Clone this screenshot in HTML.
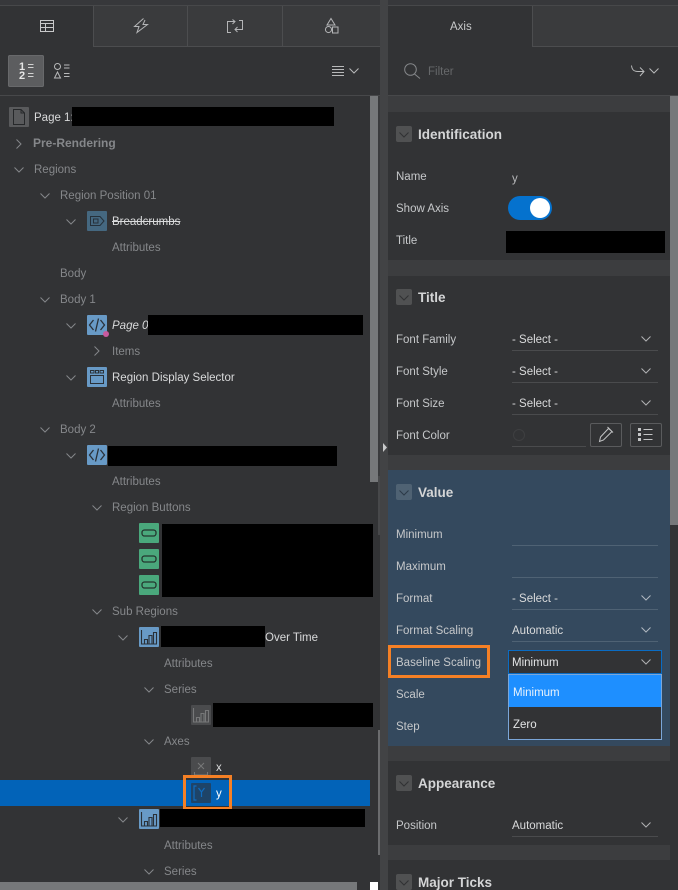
<!DOCTYPE html>
<html><head><meta charset="utf-8"><style>
html,body{margin:0;padding:0;background:#323335}
#p{position:relative;width:678px;height:890px;overflow:hidden;background:#323335;font:11.5px/16px "Liberation Sans",sans-serif;color:#d6d7d8}
#p div,#p span.a,#p svg{position:absolute}
.t{white-space:nowrap;height:16px;margin-top:1px}
.d{color:#85878a}
.w{color:#d9dadb}
.k{background:#000}
.ic{width:20px;height:20px;border-radius:1px}
.b{background:#689ac6}
.g{background:#4aa87c}
.h{font-weight:bold;font-size:13.5px;color:#d4d5d6;margin-top:1px}
.l{color:#c6c8ca;left:396px}
.u{left:512px;width:146px;height:1px;background:#4a4b4d}
.v .u,.uv{background:#4f6274}
.sel{left:512px;color:#d9dadb}
.cb{left:396px;width:16px;height:16px;background:#505152;border-radius:2px}
.band{left:388px;width:282px;background:#3c3d3f}
svg{overflow:visible}
</style></head><body><div id="p">
<svg width="0" height="0" style="left:0;top:0"><defs>
<symbol id="cd" viewBox="0 0 10 6"><path d="M0.5 .5 L5 5 L9.5 .5" fill="none" stroke="currentColor"/></symbol>
<symbol id="cr" viewBox="0 0 6 10"><path d="M.5 .5 L5 5 L.5 9.5" fill="none" stroke="currentColor"/></symbol>
<symbol id="code" viewBox="0 0 20 20"><path d="M6.5 5 L2.5 10 L6.5 15 M13.500 5 L17.500 10 L13.500 15 M11.500 3.500 L8.500 16.500" fill="none" stroke="#2a3138" stroke-width="1.300"/></symbol>
<symbol id="bar" viewBox="0 0 20 20"><path d="M2.500 3 V17 H18 M5.500 16.500 V12.500 H8.500 V16.500 M10 16.500 V8.500 H13 V16.500 M14.500 16.500 V5.500 H17.500 V16.500" fill="none" stroke="#2a3138" stroke-width="1.100"/></symbol>
<symbol id="btn" viewBox="0 0 20 20"><rect x="3" y="7" width="14" height="6" rx="2.500" fill="none" stroke="#24362e" stroke-width="1.300"/></symbol>
</defs></svg>

<div style="left:0;top:0;width:678px;height:5px;background:#37383b"></div>
<div style="left:0;top:5px;width:380px;height:1px;background:#47484a"></div>
<div style="left:388px;top:5px;width:290px;height:1px;background:#47484a"></div>

<!-- left tabs -->
<div style="left:93px;top:6px;width:287px;height:40px;background:#3a3b3d"></div>
<div style="left:93px;top:6px;width:1px;height:41px;background:#4c4d4f"></div>
<div style="left:187px;top:6px;width:1px;height:40px;background:#4c4d4f"></div>
<div style="left:282px;top:6px;width:1px;height:40px;background:#4c4d4f"></div>
<div style="left:93px;top:46px;width:287px;height:1px;background:#4c4d4f"></div>
<svg style="left:40px;top:20px" width="14" height="12"><path d="M.5 .5H13.500V11.500H.5Z M.5 3.500H13.500 M.5 7.500H13.500 M5.500 3.500V11.500" fill="none" stroke="#c8c9ca"/></svg>
<svg style="left:134px;top:18px" width="15" height="16"><path d="M9.500 .5 L.5 8.500 H5 L3 14.500 L13.500 6.500 H9 L11 2" fill="none" stroke="#b4b5b7"/></svg>
<svg style="left:227px;top:20px" width="16" height="14"><path d="M4 12.500 H.5 V1.500 H8 M5.500 -.5 L8 1.500 L5.500 4 M12 .5 H15.500 V9.500 H8 M10.500 7 L8 9.500 L10.500 12" fill="none" stroke="#b4b5b7"/></svg>
<svg style="left:323px;top:18px" width="17" height="17"><path d="M8 .5 L12 7 H4 Z M5.500 8.500 A3 3 0 1 0 5.500 14.600 A3 3 0 1 0 5.500 8.500 M9.500 9 H15 V15 H9.500 Z" fill="none" stroke="#b4b5b7"/></svg>

<!-- left toolbar -->
<div style="left:8px;top:55px;width:36px;height:32px;background:#5c5d5f;border-radius:2px;box-shadow:inset 0 0 0 1px #68696b"></div>
<div class="t" style="left:19px;top:63px;margin-top:0;font-size:11px;line-height:9px;color:#e6e6e6;font-weight:bold;height:18px;width:8px">1<br>2</div>
<svg style="left:28px;top:64px" width="6" height="14"><path d="M0 .5H5.500M0 3.500H5.500M0 9.500H5.500M0 12.500H5.500" stroke="#d2d2d2"/></svg>
<svg style="left:54px;top:63px" width="16" height="16"><circle cx="3.500" cy="3.500" r="3" fill="none" stroke="#b8b9ba"/><path d="M3.500 9 L6.500 15 H.5 Z M10 2H15.500M10 5H15.500M10 10.500H15.500M10 13.500H15.500" fill="none" stroke="#b8b9ba"/></svg>
<svg style="left:332px;top:66px" width="12" height="10"><path d="M0 .5H12M0 3.500H12M0 6.500H12M0 9.500H12" stroke="#b8b9ba"/></svg>
<svg style="left:349px;top:68px;color:#b8b9ba" width="10" height="6"><use href="#cd"/></svg>
<div style="left:0;top:95px;width:380px;height:1px;background:#47484a"></div>

<!-- scrollbars left -->
<div style="left:370px;top:96px;width:8px;height:386px;background:#76787a"></div>
<div style="left:378px;top:475px;width:2px;height:60px;background:#47484a"></div>
<div style="left:378px;top:730px;width:2px;height:125px;background:#6b6c6e"></div>
<div style="left:380px;top:0;width:8px;height:890px;background:#424345"></div>
<div style="left:378px;top:96px;width:2px;height:380px;background:#3a3b3d"></div>
<svg style="left:383px;top:443px" width="4" height="9"><path d="M0 0L4 4.500L0 9Z" fill="#c9cacb"/></svg>
<div style="left:0;top:882px;width:357px;height:8px;background:#76787a"></div>
<div style="left:370px;top:882px;width:8px;height:8px;background:#fff"></div>

<!-- selected row -->
<div style="left:0;top:780px;width:370px;height:26px;background:#0263b8"></div>

<!-- tree -->
<div style="left:9px;top:107px;width:20px;height:20px;background:#595a5c;border-radius:1px"></div>
<svg style="left:13px;top:109px" width="12" height="16"><path d="M.5 .5H8L11.500 4V15.500H.5Z M8 .5V4H11.500" fill="none" stroke="#26282a"/></svg>
<div class="t w" style="left:34px;top:109px">Page 1:</div>
<div class="k" style="left:72px;top:107px;width:262px;height:19px"></div>

<svg style="left:16px;top:139px;color:#85878a" width="6" height="10"><use href="#cr"/></svg>
<div class="t d" style="left:33px;top:135px;margin-top:0;font-weight:bold;font-size:12px">Pre-Rendering</div>
<svg style="left:14px;top:167px;color:#85878a" width="10" height="6"><use href="#cd"/></svg>
<div class="t d" style="left:34px;top:161px">Regions</div>
<svg style="left:40px;top:193px;color:#85878a" width="10" height="6"><use href="#cd"/></svg>
<div class="t d" style="left:60px;top:187px">Region Position 01</div>
<svg style="left:66px;top:219px;color:#85878a" width="10" height="6"><use href="#cd"/></svg>
<div class="ic" style="left:87px;top:211px;background:#456880"></div>
<svg style="left:90px;top:216px" width="15" height="10"><path d="M.5 .5H10L14 5L10 9.500H.5Z M3.500 3V7H8V3Z" fill="none" stroke="#26313a"/></svg>
<div class="t w" style="left:112px;top:213px;text-decoration:line-through">Breadcrumbs</div>
<div class="t d" style="left:112px;top:239px">Attributes</div>
<div class="t d" style="left:60px;top:265px">Body</div>
<svg style="left:40px;top:297px;color:#85878a" width="10" height="6"><use href="#cd"/></svg>
<div class="t d" style="left:60px;top:291px">Body 1</div>
<svg style="left:66px;top:323px;color:#85878a" width="10" height="6"><use href="#cd"/></svg>
<div class="ic b" style="left:87px;top:315px"></div>
<svg style="left:87px;top:315px" width="20" height="20"><use href="#code"/></svg>
<div style="left:103px;top:331px;width:6px;height:6px;border-radius:50%;background:#c85a9e"></div>
<div class="t w" style="left:112px;top:317px;font-style:italic">Page 0</div>
<div class="k" style="left:148px;top:315px;width:215px;height:20px"></div>
<svg style="left:94px;top:346px;color:#85878a" width="6" height="10"><use href="#cr"/></svg>
<div class="t d" style="left:112px;top:343px">Items</div>
<svg style="left:66px;top:375px;color:#85878a" width="10" height="6"><use href="#cd"/></svg>
<div class="ic b" style="left:87px;top:367px"></div>
<svg style="left:90px;top:370px" width="14" height="14"><path d="M.5 5.500H13.500V13.500H.5Z M.5 .5H4V3H.5Z M5.500 .5H8.500V3H5.500Z M10 .5H13.500V3H10Z" fill="none" stroke="#2a3138"/></svg>
<div class="t w" style="left:112px;top:369px">Region Display Selector</div>
<div class="t d" style="left:112px;top:395px">Attributes</div>
<svg style="left:40px;top:427px;color:#85878a" width="10" height="6"><use href="#cd"/></svg>
<div class="t d" style="left:60px;top:421px">Body 2</div>
<svg style="left:66px;top:453px;color:#85878a" width="10" height="6"><use href="#cd"/></svg>
<div class="ic b" style="left:87px;top:445px"></div>
<svg style="left:87px;top:445px" width="20" height="20"><use href="#code"/></svg>
<div class="k" style="left:108px;top:446px;width:229px;height:20px"></div>
<div class="t d" style="left:112px;top:473px">Attributes</div>
<svg style="left:92px;top:505px;color:#85878a" width="10" height="6"><use href="#cd"/></svg>
<div class="t d" style="left:112px;top:499px">Region Buttons</div>
<div class="ic g" style="left:139px;top:523px"></div><svg style="left:139px;top:523px" width="20" height="20"><use href="#btn"/></svg>
<div class="ic g" style="left:139px;top:549px"></div><svg style="left:139px;top:549px" width="20" height="20"><use href="#btn"/></svg>
<div class="ic g" style="left:139px;top:575px"></div><svg style="left:139px;top:575px" width="20" height="20"><use href="#btn"/></svg>
<div class="k" style="left:162px;top:524px;width:211px;height:73px"></div>
<svg style="left:92px;top:609px;color:#85878a" width="10" height="6"><use href="#cd"/></svg>
<div class="t d" style="left:112px;top:603px">Sub Regions</div>
<svg style="left:118px;top:635px;color:#85878a" width="10" height="6"><use href="#cd"/></svg>
<div class="ic b" style="left:139px;top:627px"></div>
<svg style="left:139px;top:627px" width="20" height="20"><use href="#bar"/></svg>
<div class="k" style="left:161px;top:626px;width:104px;height:21px"></div>
<div class="t w" style="left:265px;top:629px">Over Time</div>
<div class="t d" style="left:164px;top:655px">Attributes</div>
<svg style="left:144px;top:687px;color:#85878a" width="10" height="6"><use href="#cd"/></svg>
<div class="t d" style="left:164px;top:681px">Series</div>
<div class="ic" style="left:191px;top:705px;background:#4a4b4d"></div>
<svg style="left:191px;top:705px" width="20" height="20"><path d="M2.500 3V17H18M5.500 16.500V12.500H8.500V16.500M10 16.500V8.500H13V16.500M14.500 16.500V5.500H17.500V16.500" fill="none" stroke="#777879" stroke-width="1.100"/></svg>
<div class="k" style="left:213px;top:703px;width:160px;height:24px"></div>
<svg style="left:144px;top:739px;color:#85878a" width="10" height="6"><use href="#cd"/></svg>
<div class="t d" style="left:164px;top:733px">Axes</div>
<div class="ic" style="left:191px;top:757px;background:#4a4b4d"></div>
<svg style="left:191px;top:757px" width="20" height="20"><path d="M7 6L13 12M13 6L7 12M3.500 15V18H16.500V15" fill="none" stroke="#777879"/></svg>
<div class="t w" style="left:216px;top:759px">x</div>
<div class="ic" style="left:191px;top:783px;background:#1e4468"></div>
<svg style="left:191px;top:783px" width="20" height="20"><path d="M5.500 3H3V17H5.500M7.500 5L10.500 9L13.500 5M10.500 9V14" fill="none" stroke="#0f6cc0" stroke-width="1.200"/></svg>
<div class="t" style="left:216px;top:785px;color:#fff">y</div>
<div style="left:183px;top:775px;width:43px;height:29px;border:3px solid #f58025"></div>
<svg style="left:118px;top:817px;color:#85878a" width="10" height="6"><use href="#cd"/></svg>
<div class="ic b" style="left:139px;top:809px"></div>
<svg style="left:139px;top:809px" width="20" height="20"><use href="#bar"/></svg>
<div class="k" style="left:160px;top:809px;width:205px;height:18px"></div>
<div class="t d" style="left:164px;top:837px">Attributes</div>
<svg style="left:144px;top:869px;color:#85878a" width="10" height="6"><use href="#cd"/></svg>
<div class="t d" style="left:164px;top:863px">Series</div>

<!-- right header -->
<div style="left:532px;top:6px;width:146px;height:40px;background:#3a3b3d"></div>
<div style="left:532px;top:6px;width:1px;height:41px;background:#4c4d4f"></div>
<div style="left:532px;top:46px;width:146px;height:1px;background:#4c4d4f"></div>
<div class="t" style="left:450px;top:18px;color:#c8c9ca">Axis</div>
<svg style="left:404px;top:63px" width="17" height="16"><circle cx="6.500" cy="6.500" r="5.800" fill="none" stroke="#85878a"/><path d="M10.500 11L16 15.500" stroke="#85878a"/></svg>
<div class="t" style="left:428px;top:63px;color:#66686a">Filter</div>
<svg style="left:631px;top:65px" width="14" height="13"><path d="M.5 .5C1 5 3 6.500 7 6.500H13M9 2.500L13 6.500L9 11" fill="none" stroke="#b8b9ba"/></svg>
<svg style="left:649px;top:68px;color:#b8b9ba" width="10" height="6"><use href="#cd"/></svg>
<div style="left:388px;top:95px;width:290px;height:1px;background:#47484a"></div>

<!-- right sections -->
<div class="band" style="top:96px;height:16px"></div>
<div class="band" style="top:260px;height:16px"></div>
<div class="band" style="top:455px;height:15px"></div>
<div style="left:388px;top:470px;width:282px;height:276px;background:#34495e"></div>
<div class="band" style="top:746px;height:15px"></div>
<div class="band" style="top:845px;height:15px"></div>
<div style="left:670px;top:96px;width:8px;height:429px;background:#76787a"></div>

<div class="cb" style="top:126px"></div><svg style="left:399px;top:132px;color:#303133" width="10" height="6"><use href="#cd"/></svg>
<div class="t h" style="left:418px;top:126px">Identification</div>
<div class="t l" style="top:168px">Name</div>
<div class="t" style="left:512px;top:170px;color:#b6b7b9">y</div>
<div class="t l" style="top:200px">Show Axis</div>
<div style="left:508px;top:196px;width:44px;height:24px;border-radius:12px;background:#0572ce"></div>
<div style="left:530px;top:198px;width:20px;height:20px;border-radius:50%;background:#fff"></div>
<div class="t l" style="top:232px">Title</div>
<div class="k" style="left:506px;top:231px;width:159px;height:22px"></div>

<div class="cb" style="top:289px"></div><svg style="left:399px;top:295px;color:#303133" width="10" height="6"><use href="#cd"/></svg>
<div class="t h" style="left:418px;top:289px">Title</div>
<div class="t l" style="top:331px">Font Family</div>
<div class="t sel" style="top:331px">- Select -</div>
<svg style="left:641px;top:336px;color:#b0b1b3" width="10" height="6"><use href="#cd"/></svg>
<div class="u" style="top:350px"></div>
<div class="t l" style="top:363px">Font Style</div>
<div class="t sel" style="top:363px">- Select -</div>
<svg style="left:641px;top:368px;color:#b0b1b3" width="10" height="6"><use href="#cd"/></svg>
<div class="u" style="top:382px"></div>
<div class="t l" style="top:395px">Font Size</div>
<div class="t sel" style="top:395px">- Select -</div>
<svg style="left:641px;top:400px;color:#b0b1b3" width="10" height="6"><use href="#cd"/></svg>
<div class="u" style="top:414px"></div>
<div class="t l" style="top:427px">Font Color</div>
<svg style="left:513px;top:429px" width="12" height="12"><circle cx="6" cy="6" r="5.500" fill="none" stroke="#3e3f41"/></svg>
<div class="u" style="top:446px;width:74px"></div>
<div style="left:590px;top:423px;width:30px;height:22px;border:1px solid #5a5b5d;border-radius:2px"></div>
<svg style="left:598px;top:426px" width="16" height="17"><path d="M1.500 15.500L2.500 11L10.500 2.500L14 5.500L5.500 14ZM9.500 1L15 6.500" fill="none" stroke="#c4c5c6"/></svg>
<div style="left:630px;top:423px;width:30px;height:22px;border:1px solid #5a5b5d;border-radius:2px"></div>
<svg style="left:638px;top:428px" width="15" height="13"><path d="M0 0h3v3H0zM0 5h3v3H0zM0 10h3v3H0z" fill="#c4c5c6"/><path d="M5.500 1.500H14.500M5.500 6.500H14.500M5.500 11.500H14.500" stroke="#c4c5c6"/></svg>

<div class="cb" style="top:484px;background:#4f6273"></div><svg style="left:399px;top:490px;color:#2c3a47" width="10" height="6"><use href="#cd"/></svg>
<div class="t h" style="left:418px;top:484px">Value</div>
<div class="t l" style="top:526px">Minimum</div>
<div class="u uv" style="top:545px"></div>
<div class="t l" style="top:558px">Maximum</div>
<div class="u uv" style="top:577px"></div>
<div class="t l" style="top:590px">Format</div>
<div class="t sel" style="top:590px">- Select -</div>
<svg style="left:641px;top:595px;color:#b0b8c0" width="10" height="6"><use href="#cd"/></svg>
<div class="u uv" style="top:609px"></div>
<div class="t l" style="top:622px">Format Scaling</div>
<div class="t sel" style="top:622px">Automatic</div>
<svg style="left:641px;top:627px;color:#b0b8c0" width="10" height="6"><use href="#cd"/></svg>
<div class="u uv" style="top:641px"></div>
<div class="t l" style="top:654px">Baseline Scaling</div>
<div style="left:388px;top:645px;width:96px;height:27px;border:3px solid #f58025"></div>
<div style="left:508px;top:650px;width:152px;height:22px;background:#323335;border:1px solid #0a6cc4"></div>
<div class="t" style="left:512px;top:654px;color:#e4e5e6">Minimum</div>
<svg style="left:641px;top:659px;color:#b0b1b3" width="10" height="6"><use href="#cd"/></svg>
<div class="t l" style="top:686px">Scale</div>
<div class="t l" style="top:718px">Step</div>
<div style="left:508px;top:674px;width:152px;height:64px;background:#323335;border:1px solid #7ba6d8"></div>
<div style="left:509px;top:675px;width:152px;height:32px;background:#1e8fff"></div>
<div class="t" style="left:513px;top:684px;color:#e8f2fc">Minimum</div>
<div class="t" style="left:513px;top:716px;color:#e4e5e6">Zero</div>

<div class="cb" style="top:775px"></div><svg style="left:399px;top:781px;color:#303133" width="10" height="6"><use href="#cd"/></svg>
<div class="t h" style="left:418px;top:775px">Appearance</div>
<div class="t l" style="top:817px">Position</div>
<div class="t sel" style="top:817px">Automatic</div>
<svg style="left:641px;top:822px;color:#b0b1b3" width="10" height="6"><use href="#cd"/></svg>
<div class="u" style="top:836px"></div>

<div class="cb" style="top:874px"></div><svg style="left:399px;top:880px;color:#303133" width="10" height="6"><use href="#cd"/></svg>
<div class="t h" style="left:418px;top:874px">Major Ticks</div>
</div></body></html>
